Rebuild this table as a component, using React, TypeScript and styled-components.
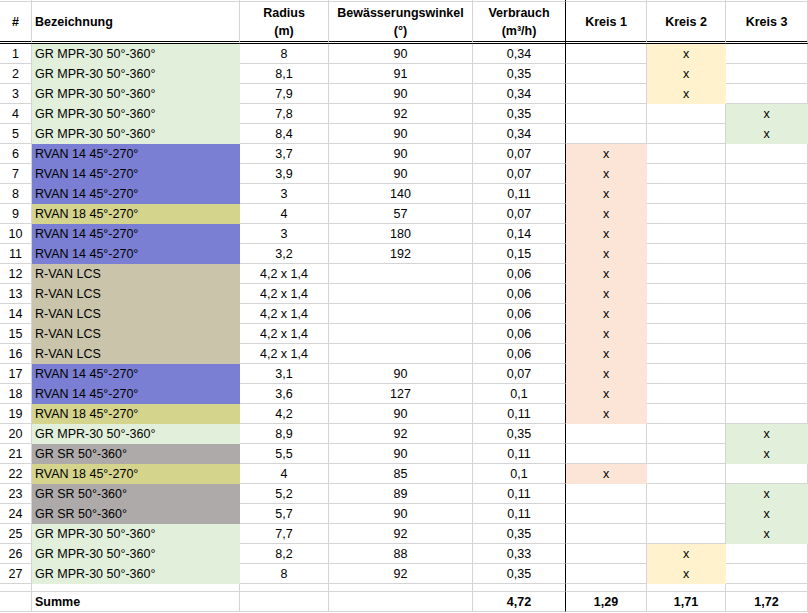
import React from 'react';
import styled, { createGlobalStyle } from 'styled-components';

const GRID = '#d4d4d4';
const COLS = '32px 208px 89px 144px 93px 81px 79px 82px';

const fills = {
  mpr: '#e2efda',
  rvan14: '#7b7fd3',
  rvan18: '#d5d48c',
  lcs: '#c9c4aa',
  sr: '#aeaaaa',
  k1: '#fce4d6',
  k2: '#fff2cc',
  k3: '#e2efda',
};

type Kind = 'mpr' | 'rvan14' | 'rvan18' | 'lcs' | 'sr';

const names: Record<Kind, string> = {
  mpr: 'GR MPR-30 50°-360°',
  rvan14: 'RVAN 14 45°-270°',
  rvan18: 'RVAN 18 45°-270°',
  lcs: 'R-VAN LCS',
  sr: 'GR SR 50°-360°',
};

interface Nozzle {
  kind: Kind;
  radius: string;
  angle: string;
  flow: string;
  circuit: 1 | 2 | 3;
}

const nozzles: Nozzle[] = [
  { kind: 'mpr', radius: '8', angle: '90', flow: '0,34', circuit: 2 },
  { kind: 'mpr', radius: '8,1', angle: '91', flow: '0,35', circuit: 2 },
  { kind: 'mpr', radius: '7,9', angle: '90', flow: '0,34', circuit: 2 },
  { kind: 'mpr', radius: '7,8', angle: '92', flow: '0,35', circuit: 3 },
  { kind: 'mpr', radius: '8,4', angle: '90', flow: '0,34', circuit: 3 },
  { kind: 'rvan14', radius: '3,7', angle: '90', flow: '0,07', circuit: 1 },
  { kind: 'rvan14', radius: '3,9', angle: '90', flow: '0,07', circuit: 1 },
  { kind: 'rvan14', radius: '3', angle: '140', flow: '0,11', circuit: 1 },
  { kind: 'rvan18', radius: '4', angle: '57', flow: '0,07', circuit: 1 },
  { kind: 'rvan14', radius: '3', angle: '180', flow: '0,14', circuit: 1 },
  { kind: 'rvan14', radius: '3,2', angle: '192', flow: '0,15', circuit: 1 },
  { kind: 'lcs', radius: '4,2 x 1,4', angle: '', flow: '0,06', circuit: 1 },
  { kind: 'lcs', radius: '4,2 x 1,4', angle: '', flow: '0,06', circuit: 1 },
  { kind: 'lcs', radius: '4,2 x 1,4', angle: '', flow: '0,06', circuit: 1 },
  { kind: 'lcs', radius: '4,2 x 1,4', angle: '', flow: '0,06', circuit: 1 },
  { kind: 'lcs', radius: '4,2 x 1,4', angle: '', flow: '0,06', circuit: 1 },
  { kind: 'rvan14', radius: '3,1', angle: '90', flow: '0,07', circuit: 1 },
  { kind: 'rvan14', radius: '3,6', angle: '127', flow: '0,1', circuit: 1 },
  { kind: 'rvan18', radius: '4,2', angle: '90', flow: '0,11', circuit: 1 },
  { kind: 'mpr', radius: '8,9', angle: '92', flow: '0,35', circuit: 3 },
  { kind: 'sr', radius: '5,5', angle: '90', flow: '0,11', circuit: 3 },
  { kind: 'rvan18', radius: '4', angle: '85', flow: '0,1', circuit: 1 },
  { kind: 'sr', radius: '5,2', angle: '89', flow: '0,11', circuit: 3 },
  { kind: 'sr', radius: '5,7', angle: '90', flow: '0,11', circuit: 3 },
  { kind: 'mpr', radius: '7,7', angle: '92', flow: '0,35', circuit: 3 },
  { kind: 'mpr', radius: '8,2', angle: '88', flow: '0,33', circuit: 2 },
  { kind: 'mpr', radius: '8', angle: '92', flow: '0,35', circuit: 2 },
];

const circuitFill = { 1: fills.k1, 2: fills.k2, 3: fills.k3 };

const GlobalStyle = createGlobalStyle`
  html, body {
    margin: 0;
    padding: 0;
    background: #ffffff;
  }
`;

const Sheet = styled.div`
  width: 808px;
  font-family: 'Liberation Sans', Arial, sans-serif;
  font-size: 12.5px;
  color: #000;
  overflow: hidden;
`;

const Row = styled.div<{ $h: number }>`
  display: grid;
  grid-template-columns: ${COLS};
  height: ${({ $h }) => $h}px;
`;

const Cell = styled.div<{
  $align?: 'left' | 'center';
  $fill?: string;
  $bold?: boolean;
  $divider?: boolean;
  $double?: boolean;
}>`
  box-sizing: border-box;
  display: flex;
  flex-direction: column;
  justify-content: center;
  align-items: ${({ $align = 'center' }) => ($align === 'left' ? 'flex-start' : 'center')};
  text-align: ${({ $align = 'center' }) => $align};
  padding-left: ${({ $align }) => ($align === 'left' ? '3px' : '0')};
  background: ${({ $fill }) => $fill ?? '#ffffff'};
  font-weight: ${({ $bold }) => ($bold ? 700 : 400)};
  line-height: 18px;
  white-space: nowrap;
  border-right: 1px solid ${({ $divider, $fill }) => ($divider ? '#000' : $fill ?? GRID)};
  border-bottom: ${({ $double, $fill }) => ($double ? '3px double #000' : `1px solid ${$fill ?? GRID}`)};
`;

const blank = (key: string) =>
  Array.from({ length: 8 }, (_, i) => <Cell key={`${key}-${i}`} $divider={i === 4} />);

export default function App() {
  return (
    <>
      <GlobalStyle />
      <Sheet>
        <Row $h={2}>{blank('top')}</Row>
        <Row $h={42}>
          <Cell $bold $double>#</Cell>
          <Cell $bold $double $align="left">Bezeichnung</Cell>
          <Cell $bold $double>
            <span>Radius</span>
            <span>(m)</span>
          </Cell>
          <Cell $bold $double>
            <span>Bewässerungswinkel</span>
            <span>(°)</span>
          </Cell>
          <Cell $bold $double $divider>
            <span>Verbrauch</span>
            <span>(m³/h)</span>
          </Cell>
          <Cell $bold $double>Kreis 1</Cell>
          <Cell $bold $double>Kreis 2</Cell>
          <Cell $bold $double>Kreis 3</Cell>
        </Row>
        {nozzles.map((n, i) => (
          <Row $h={20} key={i}>
            <Cell>{i + 1}</Cell>
            <Cell $align="left" $fill={fills[n.kind]}>{names[n.kind]}</Cell>
            <Cell>{n.radius}</Cell>
            <Cell>{n.angle}</Cell>
            <Cell $divider>{n.flow}</Cell>
            {[1, 2, 3].map((c) => (
              <Cell key={c} $fill={n.circuit === c ? circuitFill[c as 1 | 2 | 3] : undefined}>
                {n.circuit === c ? 'x' : ''}
              </Cell>
            ))}
          </Row>
        ))}
        <Row $h={8}>{blank('gap')}</Row>
        <Row $h={20}>
          <Cell />
          <Cell $bold $align="left">Summe</Cell>
          <Cell />
          <Cell />
          <Cell $bold $divider>4,72</Cell>
          <Cell $bold>1,29</Cell>
          <Cell $bold>1,71</Cell>
          <Cell $bold>1,72</Cell>
        </Row>
      </Sheet>
    </>
  );
}
